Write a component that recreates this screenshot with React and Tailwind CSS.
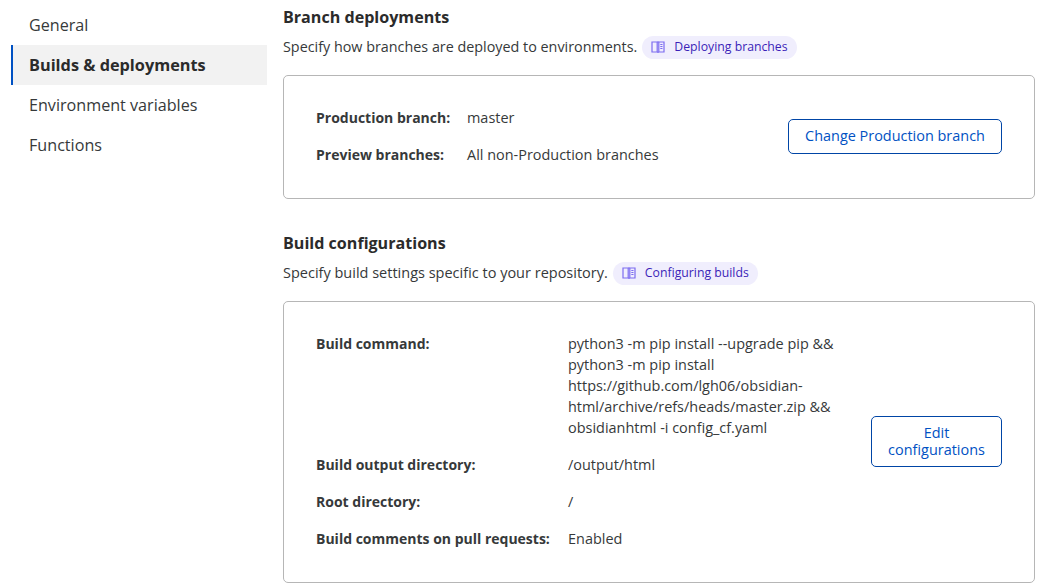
const font = '[font-family:"Open_Sans","Noto_Sans",sans-serif]';

const navItems = ['General', 'Builds & deployments', 'Environment variables', 'Functions'];

const BookIcon = () => (
  <svg width="14" height="14" viewBox="0 0 14 14" fill="none" stroke="#7c6cf0" strokeWidth="1.2">
    <path d="M1 2h5.2v10H1z" />
    <path d="M7.8 2H13v10H7.8z" />
    <path d="M6.2 2.2c.4-.2 1.2-.2 1.6 0M6.2 12c.4.2 1.2.2 1.6 0" />
    <path d="M9.3 4.5h2.2M9.3 6.5h2.2M9.3 8.5h2.2" />
  </svg>
);

const DocLink = ({ children }) => (
  <a className="inline-flex h-[23px] items-center gap-[9px] rounded-full bg-[#f0eefd] px-[9px] text-[12.25px] text-[#3b1fb8]">
    <BookIcon />
    {children}
  </a>
);

const Row = ({ label, children }) => (
  <>
    <dt className="text-[14px] font-bold">{label}</dt>
    <dd className="text-[14.45px]">{children}</dd>
  </>
);

const Section = ({ title, desc, link, className, descClassName, children }) => (
  <section className={className}>
    <h2 className="text-[16.1px] leading-[22px] font-bold text-[#2b2b2b]">{title}</h2>
    <div className="mt-[7px] flex h-[24px] items-center gap-[5px] text-[#36393a]">
      <span className={descClassName}>{desc}</span>
      <DocLink>{link}</DocLink>
    </div>
    {children}
  </section>
);

const Button = ({ className, children }) => (
  <button className={`rounded-[5px] border border-[#0045a6] bg-white px-4 text-center text-[14.45px] leading-[17px] text-[#0051c3] ${className}`}>
    {children}
  </button>
);

export default function App() {
  return (
    <div className={`flex min-h-[585px] bg-white ${font}`}>
      <nav className="ml-[11px] w-[256px] shrink-0 pt-[5px] text-[16.15px] text-[#36393a]">
        {navItems.map((item) => (
          <div
            key={item}
            className={
              item === 'Builds & deployments'
                ? 'flex h-[40px] items-center border-l-2 border-[#0051c3] bg-[#f2f2f2] pl-[16px] text-[16.3px] font-bold text-[#2b2b2b]'
                : 'flex h-[40px] items-center pl-[18px]'
            }
          >
            {item}
          </div>
        ))}
      </nav>

      <main className="ml-[16px] w-[752px] shrink-0 pt-[6px]">
        <Section
          title="Branch deployments"
          desc="Specify how branches are deployed to environments."
          link="Deploying branches"
          descClassName="text-[14.35px]"
        >
          <div className="mt-[16px] flex items-center justify-between rounded-[5px] border border-[#b6b6b6] px-[32px] pt-[31px] pb-[33px] text-[#36393a]">
            <dl className="grid grid-cols-[151px_auto] gap-y-[16px] leading-[21px]">
              <Row label="Production branch:">master</Row>
              <Row label="Preview branches:">All non-Production branches</Row>
            </dl>
            <Button className="h-[35px] w-[214px] pb-[2px]">Change Production branch</Button>
          </div>
        </Section>

        <Section
          className="mt-[33px]"
          title="Build configurations"
          desc="Specify build settings specific to your repository."
          link="Configuring builds"
          descClassName="text-[14.5px]"
        >
          <div className="mt-[16px] flex items-center justify-between rounded-[5px] border border-[#b6b6b6] px-[32px] pt-[31px] pb-[33px] text-[#36393a]">
            <dl className="grid grid-cols-[252px_285px] gap-y-[16px] leading-[21px]">
              <Row label="Build command:">
                python3 -m pip install --upgrade pip &amp;&amp; python3 -m pip install https://github.com/lgh06/obsidian-html/archive/refs/heads/master.zip &amp;&amp; obsidianhtml -i config_cf.yaml
              </Row>
              <Row label="Build output directory:">/output/html</Row>
              <Row label="Root directory:">/</Row>
              <Row label="Build comments on pull requests:">Enabled</Row>
            </dl>
            <Button className="h-[51px] w-[131px]">Edit configurations</Button>
          </div>
        </Section>
      </main>
    </div>
  );
}
